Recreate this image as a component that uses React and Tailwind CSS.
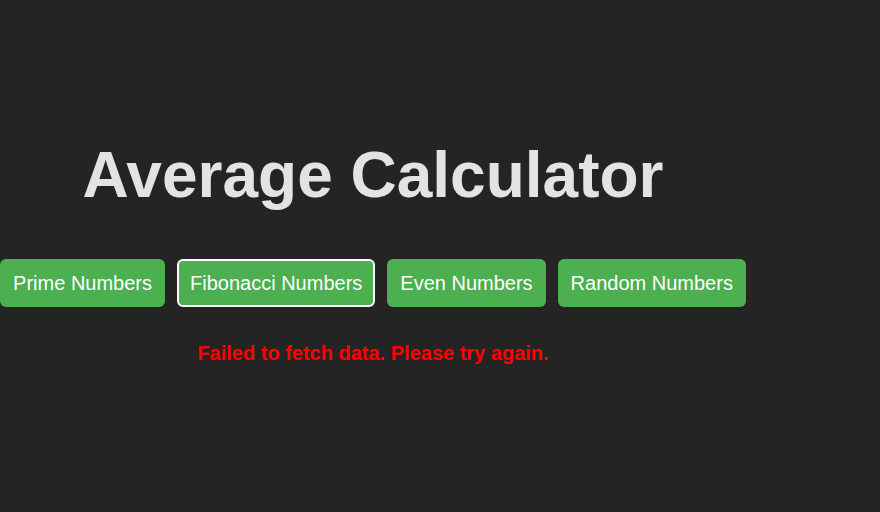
import React from 'react';

const buttons = ['Prime Numbers', 'Fibonacci Numbers', 'Even Numbers', 'Random Numbers'];

export default function App() {
  const active = 'Fibonacci Numbers';

  return (
    <div className="min-h-[512px] w-full bg-[#242424] font-['Liberation_Sans',Arial,sans-serif]">
      <div className="flex w-[746px] flex-col items-center pt-[138px]">
        <h1 className="text-[64px] font-bold leading-[74px] text-[#e3e3e3]">Average Calculator</h1>

        <div className="mt-[47px] flex gap-3">
          {buttons.map((label) => (
            <button
              key={label}
              className={
                label === active
                  ? 'whitespace-nowrap rounded-md border-2 border-white bg-[#4caf50] px-[11px] py-[11px] text-[20px] leading-[22px] text-white'
                  : 'whitespace-nowrap rounded-md border-2 border-transparent bg-[#4caf50] px-[11px] py-[11px] text-[20px] leading-[22px] text-white'
              }
            >
              {label}
            </button>
          ))}
        </div>

        <p className="mt-[35px] whitespace-nowrap text-[20px] font-bold leading-[23px] text-[#ff0000]">
          Failed to fetch data. Please try again.
        </p>
      </div>
    </div>
  );
}
